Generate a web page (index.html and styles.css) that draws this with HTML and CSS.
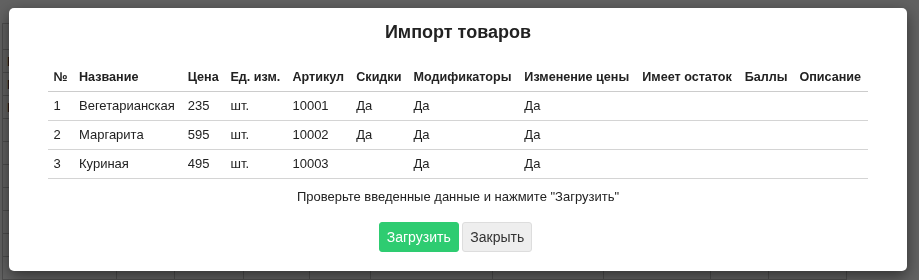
FILE: index.html
```html
<!DOCTYPE html>
<html lang="ru">
<head>
  <meta charset="UTF-8" />
  <title>Импорт товаров</title>
  <link rel="stylesheet" href="styles.css">
</head>
<body>
  <table class="page-table">
    <thead>
      <tr>
        <th></th><th></th><th></th><th></th><th></th>
        <th></th><th></th><th></th><th></th><th></th>
      </tr>
    </thead>
    <tbody>
      <tr><td>Вегетарианская</td><td></td><td></td><td></td><td></td><td></td><td></td><td></td><td></td><td></td></tr>
      <tr><td>Маргарита</td><td></td><td></td><td></td><td></td><td></td><td></td><td></td><td></td><td></td></tr>
      <tr><td>Куриная</td><td></td><td></td><td></td><td></td><td></td><td></td><td></td><td></td><td></td></tr>
      <tr><td></td><td></td><td></td><td></td><td></td><td></td><td></td><td></td><td></td><td></td></tr>
      <tr><td></td><td></td><td></td><td></td><td></td><td></td><td></td><td></td><td></td><td></td></tr>
      <tr><td></td><td></td><td></td><td></td><td></td><td></td><td></td><td></td><td></td><td></td></tr>
      <tr><td></td><td></td><td></td><td></td><td></td><td></td><td></td><td></td><td></td><td></td></tr>
      <tr><td></td><td></td><td></td><td></td><td></td><td></td><td></td><td></td><td></td><td></td></tr>
      <tr><td></td><td></td><td></td><td></td><td></td><td></td><td></td><td></td><td></td><td></td></tr>
      <tr><td></td><td></td><td></td><td></td><td></td><td></td><td></td><td></td><td></td><td></td></tr>
    </tbody>
  </table>

  <div class="overlay">
    <div class="modal">
      <h3 class="modal-title">Импорт товаров</h3>

      <table class="import-table">
        <thead>
          <tr>
            <th>№</th>
            <th>Название</th>
            <th>Цена</th>
            <th>Ед. изм.</th>
            <th>Артикул</th>
            <th>Скидки</th>
            <th>Модификаторы</th>
            <th>Изменение цены</th>
            <th>Имеет остаток</th>
            <th>Баллы</th>
            <th>Описание</th>
          </tr>
        </thead>
        <tbody>
          <tr><td>1</td><td>Вегетарианская</td><td>235</td><td>шт.</td><td>10001</td><td>Да</td><td>Да</td><td>Да</td><td></td><td></td><td></td></tr>
          <tr><td>2</td><td>Маргарита</td><td>595</td><td>шт.</td><td>10002</td><td>Да</td><td>Да</td><td>Да</td><td></td><td></td><td></td></tr>
          <tr><td>3</td><td>Куриная</td><td>495</td><td>шт.</td><td>10003</td><td></td><td>Да</td><td>Да</td><td></td><td></td><td></td></tr>
        </tbody>
      </table>

      <p class="hint">Проверьте введенные данные и нажмите "Загрузить"</p>

      <div class="actions">
        <button class="btn green">Загрузить</button>
        <button class="btn gray">Закрыть</button>
      </div>
    </div>
  </div>
</body>
</html>
```

FILE: styles.css
```css
body {
  margin: 0;
  font-family: "Liberation Sans", Arial, sans-serif;
  font-size: 13px;
  color: #222;
  background: #fff;
}

/* страница под модальным окном */
.page-table {
  border-collapse: collapse;
  margin: 23px 0 0 2px;
  width: 754px;
  table-layout: fixed;
}
.page-table th,
.page-table td {
  border: 1px solid #c8c8c8;
  height: 22px;
  padding: 0 4px;
  text-align: left;
  white-space: nowrap;
  overflow: hidden;
  font-size: 13px;
}
.page-table th {
  height: 25px;
}
.page-table th:nth-child(1) { width: 105px; }
.page-table th:nth-child(2) { width: 49px; }
.page-table th:nth-child(3) { width: 60px; }
.page-table th:nth-child(4) { width: 57px; }
.page-table th:nth-child(5) { width: 52px; }
.page-table th:nth-child(6) { width: 113px; }
.page-table th:nth-child(7) { width: 102px; }
.page-table th:nth-child(8) { width: 98px; }
.page-table th:nth-child(9) { width: 49px; }
.page-table th:nth-child(10) { width: 69px; }

.overlay {
  position: fixed;
  inset: 0;
  background: rgb(0 0 0 / 0.62);
}

.modal {
  margin: 8px 0 0 9px;
  width: 820px;
  padding: 14px 39px 19px;
  background: #fff;
  border-radius: 5px;
  box-shadow: 0 5px 15px rgb(0 0 0 / 0.5);
}

.modal-title {
  margin: 0 0 21px;
  font-size: 18px;
  line-height: 20px;
  font-weight: bold;
  text-align: center;
  color: #222;
}

.import-table {
  width: 100%;
  border-collapse: collapse;
}
.import-table th,
.import-table td {
  padding: 6px 5.5px;
  line-height: 16px;
  text-align: left;
  white-space: nowrap;
  font-size: 13px;
}
.import-table th {
  font-size: 12.6px;
  font-weight: bold;
  border-bottom: 1px solid #ccc;
}
.import-table td {
  border-bottom: 1px solid #d4d4d4;
}

.hint {
  margin: 9px 0 0;
  line-height: 17px;
  text-align: center;
}

.actions {
  margin-top: 17px;
  padding-right: 5px;
  text-align: center;
}

.btn {
  display: inline-block;
  height: 30px;
  padding: 0 7px;
  font-family: inherit;
  font-size: 14px;
  border-radius: 3px;
  cursor: pointer;
  vertical-align: middle;
}
.btn.green {
  background-color: #2ecc71;
  border: 1px solid #2ecc71;
  color: white;
}
.btn.gray {
  background-color: #eeeeee;
  border: 1px solid #dddddd;
  color: #333;
}
```
